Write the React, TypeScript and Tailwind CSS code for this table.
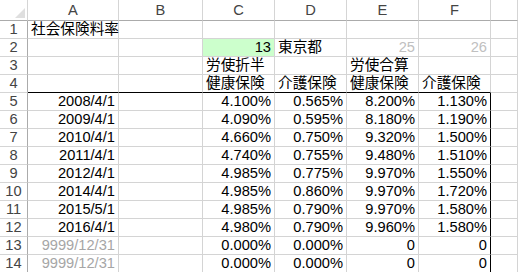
type Cell = {
  v?: string;
  align?: "left" | "right";
  muted?: boolean;
  faint?: boolean;
  fill?: boolean;
};

const COLS = ["A", "B", "C", "D", "E", "F", ""];

const dataRows: [string, string, string, string, string][] = [
  ["2008/4/1", "4.100%", "0.565%", "8.200%", "1.130%"],
  ["2009/4/1", "4.090%", "0.595%", "8.180%", "1.190%"],
  ["2010/4/1", "4.660%", "0.750%", "9.320%", "1.500%"],
  ["2011/4/1", "4.740%", "0.755%", "9.480%", "1.510%"],
  ["2012/4/1", "4.985%", "0.775%", "9.970%", "1.550%"],
  ["2014/4/1", "4.985%", "0.860%", "9.970%", "1.720%"],
  ["2015/5/1", "4.985%", "0.790%", "9.970%", "1.580%"],
  ["2016/4/1", "4.980%", "0.790%", "9.960%", "1.580%"],
];

function buildRows(): Cell[][] {
  const rows: Cell[][] = [
    [{ v: "社会保険料率" }, {}, {}, {}, {}, {}, {}],
    [
      {},
      {},
      { v: "13", align: "right", fill: true },
      { v: "東京都" },
      { v: "25", align: "right", faint: true },
      { v: "26", align: "right", faint: true },
      {},
    ],
    [{}, {}, { v: "労使折半" }, {}, { v: "労使合算" }, {}, {}],
    [{}, {}, { v: "健康保険" }, { v: "介護保険" }, { v: "健康保険" }, { v: "介護保険" }, {}],
  ];
  for (const r of dataRows) {
    rows.push([
      { v: r[0], align: "right" },
      {},
      { v: r[1], align: "right" },
      { v: r[2], align: "right" },
      { v: r[3], align: "right" },
      { v: r[4], align: "right" },
      {},
    ]);
  }
  for (let i = 0; i < 2; i++) {
    rows.push([
      { v: "9999/12/31", align: "right", muted: true },
      {},
      { v: "0.000%", align: "right" },
      { v: "0.000%", align: "right" },
      { v: "0", align: "right" },
      { v: "0", align: "right" },
      {},
    ]);
  }
  return rows;
}

export default function App() {
  const rows = buildRows();

  return (
    <div
      className="h-[272px] w-[518px] overflow-hidden bg-white text-[14.67px] text-black"
      style={{ fontFamily: '"Liberation Sans", "Noto Sans CJK JP", sans-serif' }}
    >
      <div className="grid grid-cols-[28px_91px_84px_72px_72px_72px_72px_1fr]">
        {/* corner */}
        <div className="relative h-[21px] border-b border-r border-b-[#ababab] border-r-[#d5d5d5]">
          <svg className="absolute left-[15px] top-[8px]" width="10" height="10" viewBox="0 0 10 10">
            <polygon points="10,0 10,10 0,10" fill="#dfdfdf" />
          </svg>
        </div>
        {COLS.map((c, i) => (
          <div
            key={"h" + i}
            className="flex h-[21px] items-end justify-center border-b border-r border-b-[#ababab] border-r-[#d5d5d5] pb-[1px] leading-[17px] text-[#444]"
          >
            {c}
          </div>
        ))}

        {rows.map((row, ri) => {
          const n = ri + 1;
          return [
            <div
              key={"r" + n}
              className="flex h-[18px] items-end justify-center border-b border-r border-b-[#d5d5d5] border-r-[#ababab] leading-[17px] text-[#444]"
            >
              {n}
            </div>,
            ...row.map((cell, ci) => {
              const blackBottom = n === 4 && ci < 6;
              const blackRight = n >= 5 && ci === 5;
              return (
                <div
                  key={n + "-" + ci}
                  className={[
                    "flex h-[18px] items-end overflow-visible whitespace-nowrap border-b border-r leading-[17px]",
                    cell.align === "right" ? "justify-end pr-[3px]" : "justify-start pl-[3px]",
                    blackBottom ? "border-b-black" : "border-b-[#d4d4d4]",
                    blackRight ? "border-r-black" : "border-r-[#d4d4d4]",
                    cell.fill ? "bg-[#ccffcc]" : "",
                    cell.muted ? "text-[#a6a6a6]" : cell.faint ? "text-[#c0c0c0]" : "",
                  ].join(" ")}
                >
                  {cell.v}
                </div>
              );
            }),
          ];
        })}
      </div>
    </div>
  );
}
